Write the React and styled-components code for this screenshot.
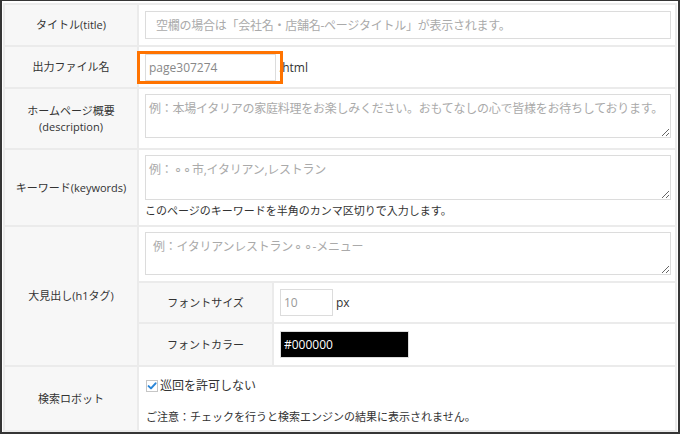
import styled, { createGlobalStyle } from "styled-components";

const GlobalStyle = createGlobalStyle`
  html, body {
    margin: 0;
    padding: 0;
    background: #fff;
  }
  body {
    font-family: "Open Sans", "Noto Sans CJK JP", sans-serif;
    color: #333;
  }
`;

const Frame = styled.div`
  box-sizing: border-box;
  width: 680px;
  height: 434px;
  border: 2px solid #353535;
  border-top-width: 1px;
  padding: 2px 1px 0 1px;
  background: #fff;
  overflow: hidden;
`;

const Table = styled.div`
  border: 2px solid #ebebeb;
`;

const Row = styled.div`
  display: grid;
  grid-template-columns: ${(p) => p.$col || 134}px 1fr;
  height: ${(p) => p.$h}px;
  & + & {
    border-top: 2px solid #ebebeb;
  }
`;

const Label = styled.div`
  background: #f7f7f7;
  border-right: 2px solid #ebebeb;
  display: flex;
  align-items: center;
  justify-content: center;
  text-align: center;
  font-size: 11px;
  line-height: 16px;
  color: #333;
`;

const Value = styled.div`
  display: flex;
  flex-direction: ${(p) => (p.$inline ? "row" : "column")};
  justify-content: ${(p) => (p.$inline ? "flex-start" : p.$top ? "flex-start" : "center")};
  align-items: ${(p) => (p.$inline ? "center" : "stretch")};
  padding: ${(p) => p.$pad || "0 4px 0 6px"};
  min-width: 0;
`;

const TextInput = styled.input`
  box-sizing: border-box;
  display: block;
  width: ${(p) => (p.$w ? `${p.$w}px` : "100%")};
  height: ${(p) => p.$h || 28}px;
  margin: 0;
  border: 1px solid #dcdcdc;
  padding: 0 ${(p) => p.$padX ?? 10}px;
  font-family: inherit;
  font-size: 12px;
  letter-spacing: ${(p) => (p.$tight ? "-0.25px" : "0")};
  color: ${(p) => p.$color || "#888"};
  background: ${(p) => p.$bg || "#fff"};
  outline: none;
  &::placeholder {
    color: #aaa;
  }
`;

const TextArea = styled.textarea`
  box-sizing: border-box;
  display: block;
  width: 100%;
  height: ${(p) => p.$h}px;
  margin: 0;
  border: 1px solid #dcdcdc;
  padding: 5px ${(p) => p.$padX ?? 3}px;
  font-family: inherit;
  font-size: 12px;
  line-height: 18px;
  letter-spacing: -0.25px;
  color: #888;
  outline: none;
  &::placeholder {
    color: #aaa;
  }
`;

const Highlight = styled.div`
  position: relative;
  &::after {
    content: "";
    position: absolute;
    top: -3px;
    bottom: -3px;
    left: -8px;
    right: -7px;
    border: 3px solid #ff7300;
    pointer-events: none;
  }
`;

const Suffix = styled.span`
  margin-left: 3px;
  font-size: 12px;
  color: #333;
`;

const Help = styled.div`
  font-size: 11px;
  line-height: 18px;
  color: #333;
  margin-top: ${(p) => p.$mt || 0}px;
`;

const Upper = styled.div`
  padding: 5px 4px 6px 6px;
`;

const SubTable = styled.div`
  border-top: 2px solid #ebebeb;
`;

const CheckLine = styled.label`
  display: flex;
  align-items: center;
  gap: 2px;
  font-size: 12px;
  line-height: 16px;
  color: #333;
`;

function CheckIcon() {
  return (
    <svg width="12" height="12" viewBox="0 0 12 12">
      <rect x="0.5" y="0.5" width="11" height="11" fill="#fff" stroke="#c6c6c6" />
      <path
        d="M2.6 6.1 L5 8.4 L9.6 3.3"
        fill="none"
        stroke="#2b86d8"
        strokeWidth="2"
        strokeLinecap="round"
        strokeLinejoin="round"
      />
    </svg>
  );
}

export default function App() {
  return (
    <>
      <GlobalStyle />
      <Frame>
        <Table>
          <Row $h={40}>
            <Label>タイトル(title)</Label>
            <Value>
              <TextInput
                readOnly
                $tight
                placeholder="空欄の場合は「会社名・店舗名-ページタイトル」が表示されます。"
              />
            </Value>
          </Row>

          <Row $h={40}>
            <Label>出力ファイル名</Label>
            <Value $inline>
              <Highlight>
                <TextInput readOnly $w={131} $h={27} $padX={3} defaultValue="page307274" />
              </Highlight>
              <Suffix>.html</Suffix>
            </Value>
          </Row>

          <Row $h={59}>
            <Label>
              ホームページ概要
              <br />
              (description)
            </Label>
            <Value $top $pad="5px 4px 0 6px">
              <TextArea
                readOnly
                $h={44}
                placeholder="例：本場イタリアの家庭料理をお楽しみください。おもてなしの心で皆様をお待ちしております。"
              />
            </Value>
          </Row>

          <Row $h={75}>
            <Label>キーワード(keywords)</Label>
            <Value $top $pad="5px 4px 0 6px">
              <TextArea readOnly $h={45} placeholder="例：⚬⚬市,イタリアン,レストラン" />
              <Help $mt={2}>このページのキーワードを半角のカンマ区切りで入力します。</Help>
            </Value>
          </Row>

          <Row $h={138}>
            <Label>大見出し(h1タグ)</Label>
            <Value $top $pad="0">
              <Upper>
                <TextArea readOnly $h={43} $padX={7} placeholder="例：イタリアンレストラン⚬⚬-メニュー" />
              </Upper>
              <SubTable>
                <Row $h={39} $col={135}>
                  <Label>フォントサイズ</Label>
                  <Value $inline>
                    <TextInput readOnly $w={53} $h={27} $padX={3} $color="#999" defaultValue="10" />
                    <Suffix>px</Suffix>
                  </Value>
                </Row>
                <Row $h={41} $col={135}>
                  <Label>フォントカラー</Label>
                  <Value $inline>
                    <TextInput
                      readOnly
                      $w={129}
                      $h={27}
                      $padX={3}
                      $color="#fff"
                      $bg="#000"
                      defaultValue="#000000"
                    />
                  </Value>
                </Row>
              </SubTable>
            </Value>
          </Row>

          <Row $h={63}>
            <Label>検索ロボット</Label>
            <Value $top $pad="11px 4px 0 7px">
              <CheckLine>
                <CheckIcon />
                巡回を許可しない
              </CheckLine>
              <Help $mt={14}>ご注意：チェックを行うと検索エンジンの結果に表示されません。</Help>
            </Value>
          </Row>
        </Table>
      </Frame>
    </>
  );
}
